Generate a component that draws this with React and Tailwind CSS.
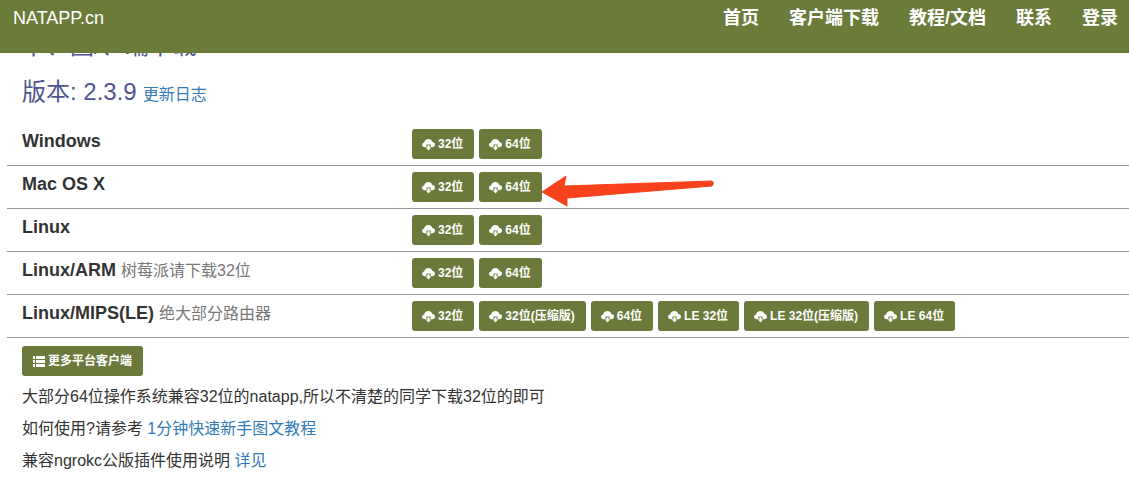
const FONT = "font-['Liberation_Sans','Noto_Sans_CJK_SC',sans-serif]";

const rows = [
  { name: "Windows", buttons: ["32位", "64位"] },
  { name: "Mac OS X", buttons: ["32位", "64位"] },
  { name: "Linux", buttons: ["32位", "64位"] },
  { name: "Linux/ARM", note: "树莓派请下载32位", buttons: ["32位", "64位"] },
  {
    name: "Linux/MIPS(LE)",
    note: "绝大部分路由器",
    buttons: ["32位", "32位(压缩版)", "64位", "LE 32位", "LE 32位(压缩版)", "LE 64位"],
  },
];

const navLinks = ["首页", "客户端下载", "教程/文档", "联系", "登录"];

// cloud with the arrow poking out below it
function CloudIcon() {
  return (
    <svg className="h-[13px] w-[13px]" viewBox="0 0 13 13" fill="white">
      <path d="M3 9.2 C1.2 9.2 0 8.1 0 6.7 C0 5.4 1 4.5 2.2 4.4 C2.6 2.4 4.3 1 6.3 1 C8.3 1 9.9 2.3 10.4 4.1 C11.9 4.2 13 5.3 13 6.7 C13 8.1 11.8 9.2 10.2 9.2 L8.6 9.2 L8.6 6.4 L4.4 6.4 L4.4 9.2 Z" />
      <path d="M5.4 7.2 L7.6 7.2 L7.6 9.6 L9.2 9.6 L6.5 12.6 L3.8 9.6 L5.4 9.6 Z" />
    </svg>
  );
}

function ListIcon() {
  return (
    <svg className="h-[11px] w-[12px]" viewBox="0 0 12 11" fill="white">
      <rect x="0" y="0" width="2" height="3" />
      <rect x="3" y="0" width="9" height="3" />
      <rect x="0" y="4" width="2" height="3" />
      <rect x="3" y="4" width="9" height="3" />
      <rect x="0" y="8" width="2" height="3" />
      <rect x="3" y="8" width="9" height="3" />
    </svg>
  );
}

function DownloadButton({ label }) {
  return (
    <a className="flex h-[30px] items-center gap-[3px] rounded-[3px] bg-[#6b7a3a] pl-[10px] pr-[11px] text-[12px] font-bold text-white">
      <CloudIcon />
      {label}
    </a>
  );
}

export default function App() {
  return (
    <div className={`relative h-[485px] w-[1129px] overflow-hidden bg-white text-[#333] ${FONT}`}>
      {/* Navbar */}
      <nav className="absolute inset-x-0 top-0 z-10 flex h-[53px] items-start justify-between bg-[#6b7c3a] pl-[13px] pr-[11px] text-white">
        <span className="mt-[7px] text-[18px] leading-[22px]">NATAPP.cn</span>
        <div className="mt-[7px] flex gap-[30px] text-[18px] font-bold leading-[22px]">
          {navLinks.map((link) => (
            <a key={link}>{link}</a>
          ))}
        </div>
      </nav>

      <div className="pl-[7px] pt-[33px]">
        <h2 className="pl-[15px] text-[24px] leading-[26px] text-[#4f5590]">下、图/、端下载</h2>
        <h3 className="mt-[19px] flex items-baseline gap-[6px] pl-[15px] text-[24px] leading-[28px] text-[#4f5590]">
          版本: 2.3.9
          <a className="text-[16px] text-[#337ab7]">更新日志</a>
        </h3>

        {/* Platform table */}
        <div className="mt-[14px]">
          {rows.map((row) => (
            <div key={row.name} className="flex h-[43px] border-b border-[#999] pl-[15px] pt-[6px]">
              <div className="w-[390px] text-[18px] leading-[24px]">
                <span className="font-bold">{row.name}</span>
                {row.note && <span className="ml-[5px] text-[16px] text-[#777]">{row.note}</span>}
              </div>
              <div className="flex h-[30px] gap-[5px]">
                {row.buttons.map((label) => (
                  <DownloadButton key={label} label={label} />
                ))}
              </div>
            </div>
          ))}
        </div>

        <div className="pl-[15px] text-[16px] text-[#333]">
          <a className="mt-[8px] flex h-[30px] w-[121px] items-center justify-center gap-[3px] rounded-[3px] bg-[#6b7a3a] text-[12px] font-bold text-white">
            <ListIcon />
            更多平台客户端
          </a>
          <p className="mt-[11px] leading-[20px]">大部分64位操作系统兼容32位的natapp,所以不清楚的同学下载32位的即可</p>
          <p className="mt-[12px] leading-[20px]">
            如何使用?请参考 <a className="text-[#337ab7]">1分钟快速新手图文教程</a>
          </p>
          <p className="mt-[12px] leading-[20px]">
            兼容ngrokc公版插件使用说明 <a className="text-[#337ab7]">详见</a>
          </p>
        </div>
      </div>

      {/* Annotation arrow */}
      <svg className="absolute left-[540px] top-[172px]" width="176" height="40" viewBox="0 0 176 40">
        <path
          d="M2 20 L26 4 L24 14 L172 9 Q175 11 172 14 L27 26 L27 34 Z"
          fill="#f8421c"
          stroke="#f8421c"
          strokeWidth="1"
          strokeLinejoin="round"
        />
      </svg>
    </div>
  );
}
